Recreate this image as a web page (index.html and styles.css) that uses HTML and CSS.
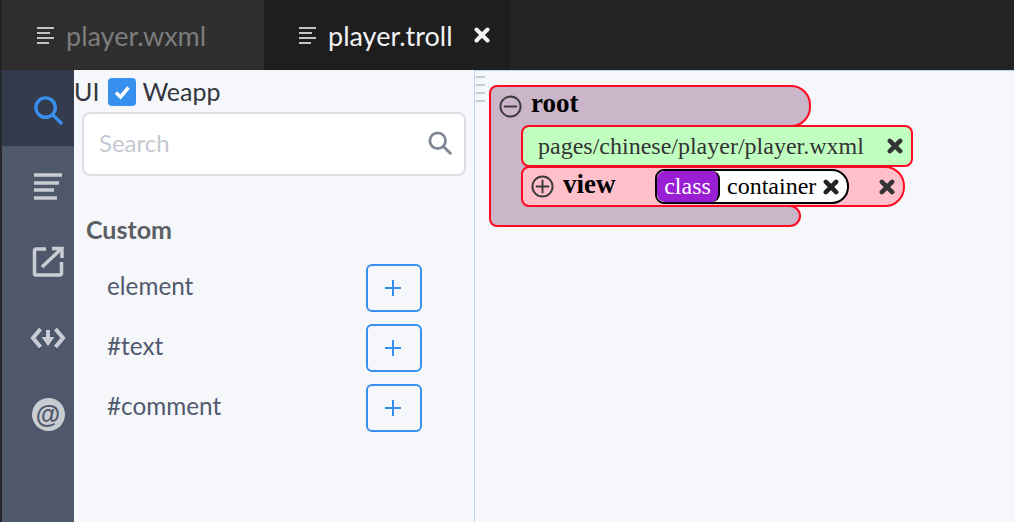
FILE: index.html
```html
<!DOCTYPE html>
<html lang="en">
<head>
<meta charset="utf-8">
<title>player.troll</title>
<link rel="stylesheet" href="styles.css">
</head>
<body>
<div class="app">
  <header class="tabbar">
    <div class="tab tab-idle">
      <svg class="tab-icon" viewBox="0 0 18 18"><path d="M0 2h17M0 7h13M0 12h17M0 17h12" /></svg>
      <span>player.wxml</span>
    </div>
    <div class="tab tab-active">
      <svg class="tab-icon" viewBox="0 0 18 18"><path d="M0 2h17M0 7h13M0 12h17M0 17h12" /></svg>
      <span>player.troll</span>
      <svg class="tab-close" viewBox="0 0 16 16"><path d="M2.500 2.500l11 11M13.500 2.500l-11 11" /></svg>
    </div>
  </header>
  <main class="workspace">
    <nav class="rail">
      <div class="rail-item rail-active">
        <svg viewBox="0 0 32 32" class="icon-search-blue"><circle cx="13" cy="13" r="10" /><path d="M20.500 20.500L30 30" /></svg>
      </div>
      <div class="rail-item">
        <svg viewBox="0 0 30 30" class="icon-list"><path d="M1 4h28M1 12h25M1 19h20M1 27h23" /></svg>
      </div>
      <div class="rail-item">
        <svg viewBox="0 0 32 32" class="icon-ext"><path d="M14 3H4a1.500 1.500 0 0 0-1.500 1.500v23A1.500 1.500 0 0 0 4 29h24a1.500 1.500 0 0 0 1.500-1.500V16" /><path d="M10 21L28 4M20 2.500h10V12" /></svg>
      </div>
      <div class="rail-item">
        <svg viewBox="0 0 36 22" class="icon-code"><path d="M10.500 2L3 11l7.500 9M25.500 2L33 11l-7.500 9" /><path d="M18 3v10" /><path class="arrow" d="M11.500 10h13L18 19z" /></svg>
      </div>
      <div class="rail-item">
        <div class="at-badge">@</div>
      </div>
    </nav>
    <aside class="panel">
      <div class="mode-row">
        <span>UI</span>
        <span class="checkbox">
          <svg viewBox="0 0 28 28"><path d="M8 14.500l4.500 4.500L20.500 9.500" /></svg>
        </span>
        <span>Weapp</span>
      </div>
      <div class="search">
        <span class="search-text">Search</span>
        <svg viewBox="0 0 26 26" class="icon-search-grey"><circle cx="10.500" cy="10.500" r="8.500" /><path d="M16.500 16.500L25 25" /></svg>
      </div>
      <h2 class="group-title">Custom</h2>
      <ul class="palette">
        <li class="palette-row"><span>element</span><button class="add" type="button"><svg viewBox="0 0 16 16"><path d="M8 0v16M0 8h16" /></svg></button></li>
        <li class="palette-row"><span>#text</span><button class="add" type="button"><svg viewBox="0 0 16 16"><path d="M8 0v16M0 8h16" /></svg></button></li>
        <li class="palette-row"><span>#comment</span><button class="add" type="button"><svg viewBox="0 0 16 16"><path d="M8 0v16M0 8h16" /></svg></button></li>
      </ul>
    </aside>
    <section class="canvas">
      <div class="handle"><i></i><i></i><i></i><i></i></div>
      <div class="tree">
        <div class="root-head">
          <svg class="toggle toggle-root" viewBox="0 0 24 24"><circle cx="12" cy="12" r="10.500" /><path d="M5 12h14" /></svg>
          <b class="root-name">root</b>
        </div>
        <div class="root-body">
          <div class="spine"></div>
          <div class="children">
            <div class="node-file">
              <span>pages/chinese/player/player.wxml</span>
              <svg class="x" viewBox="0 0 14 14"><path d="M2.500 2.500l9 9M11.500 2.500l-9 9" /></svg>
            </div>
            <div class="node-view">
              <svg class="toggle" viewBox="0 0 24 24"><circle cx="12" cy="12" r="10.500" /><path d="M5 12h14M12 5v14" /></svg>
              <b class="view-name">view</b>
              <div class="attr">
                <span class="attr-key">class</span>
                <span class="attr-val">container</span>
                <svg class="x x-attr" viewBox="0 0 14 14"><path d="M2.500 2.500l9 9M11.500 2.500l-9 9" /></svg>
              </div>
              <svg class="x x-view" viewBox="0 0 14 14"><path d="M2.500 2.500l9 9M11.500 2.500l-9 9" /></svg>
            </div>
          </div>
        </div>
        <div class="root-foot"></div>
      </div>
    </section>
  </main>
</div>
</body>
</html>
```
FILE: styles.css
```css
* { box-sizing: border-box; }
html, body { margin: 0; padding: 0; }
body { width: 1014px; height: 522px; overflow: hidden; background: #f5f7fa; font-family: Lato, "Open Sans", sans-serif; }
svg { display: block; fill: none; }
.app { display: flex; flex-direction: column; height: 522px; }

.tabbar { display: flex; height: 70px; flex: none; background: #232323; padding-left: 2px; }
.tab { display: flex; align-items: center; height: 70px; font-size: 27px; }
.tab-idle { width: 262px; padding-left: 35px; gap: 11px; color: #7d7d7d; background: #2e2e2e; }
.tab-active { width: 246px; padding-left: 35px; gap: 11px; color: #f2f2f2; background: #1e1e1e; }
.tab-icon { width: 18px; height: 18px; stroke: #c4c4c4; stroke-width: 2; }
.tab-close { width: 16px; height: 16px; stroke: #f2f2f2; stroke-width: 4; stroke-linecap: round; margin-left: 10px; }

.workspace { display: flex; flex: 1; min-height: 0; }
.rail { width: 74px; flex: none; background: #4f586b; border-left: 2px solid #26282d; display: flex; flex-direction: column; }
.rail-item { height: 76px; flex: none; display: flex; align-items: center; justify-content: center; padding: 4px 0 0 20px; }
.rail-active { background: #333b4c; }
.icon-search-blue { width: 31px; height: 31px; stroke: #3890ee; stroke-width: 3.500; }
.icon-list { width: 30px; height: 30px; stroke: #c9ccd2; stroke-width: 3.500; }
.icon-ext { width: 32px; height: 32px; stroke: #c9ccd2; stroke-width: 3.500; }
.icon-code { width: 36px; height: 22px; stroke: #c9ccd2; stroke-width: 4; }
.icon-code .arrow { fill: #c9ccd2; stroke: none; }
.at-badge { width: 33px; height: 33px; border-radius: 50%; background: #c9ccd2; color: #4f586b; font: 700 25px/32px "Liberation Sans", sans-serif; text-align: center; }

.panel { width: 400px; flex: none; background: #f5f7fa; color: #33373d; padding: 8px 8px 0 0; }
.mode-row { display: flex; align-items: center; gap: 9px; height: 28px; font-size: 25px; line-height: 26px; }
.mode-row > span:first-child { margin-top: -2px; }
.mode-row .checkbox + span { margin: -2px 0 0 -3px; }
.checkbox { width: 28px; height: 28px; background: #3890ee; border-radius: 4px; }
.checkbox svg { width: 28px; height: 28px; stroke: #fff; stroke-width: 3.500; }
.search { margin: 6px 0 0 8px; width: 384px; height: 64px; background: #fff; border: 2px solid #dcdee6; border-radius: 8px; display: flex; align-items: center; justify-content: space-between; padding: 0 12px 4px 15px; }
.search-text { font-size: 24px; color: #c5c9d1; }
.icon-search-grey { width: 24px; height: 24px; stroke: #808695; stroke-width: 3; margin-top: 2px; }
.group-title { margin: 39px 0 0 12px; font-size: 25px; line-height: 28px; font-weight: 700; color: #5b5e63; }
.palette { list-style: none; margin: 21px 0 0; padding: 0 0 0 33px; }
.palette-row { display: flex; align-items: center; justify-content: space-between; width: 315px; height: 48px; margin-bottom: 12px; font-size: 24.300px; color: #515a6e; }
.palette-row span { position: relative; bottom: 3px; }
.add { width: 56px; height: 48px; background: transparent; border: 2px solid #3890ee; border-radius: 6px; display: flex; align-items: center; justify-content: center; padding: 0 2px 0 0; }
.add svg { width: 16px; height: 16px; stroke: #3890ee; stroke-width: 2; }

.canvas { flex: 1; position: relative; border-left: 1px solid #b9d4f5; border-top: 1px solid #b9d4f5; background: #f5f7fa; padding: 14px 0 0 14px; }
.handle { position: absolute; left: 1px; top: 5px; display: flex; flex-direction: column; gap: 6px; }
.handle i { display: block; width: 9px; height: 2px; background: #c6cad3; }

.tree { display: inline-flex; flex-direction: column; align-items: flex-start; font-family: "Liberation Serif", serif; }
.toggle { width: 23px; height: 23px; stroke: #3a3a3a; stroke-width: 2; flex: none; }
.toggle-root { margin-top: 4px; }
.root-head { width: 322px; height: 42px; background: #cbb5c9; border: 2px solid #ff0a20; border-radius: 8px 20px 20px 0; display: flex; align-items: flex-start; padding: 4px 0 0 8px; gap: 9px; }
.root-name { font-size: 27px; line-height: 24px; color: #000; }
.root-body { display: flex; position: relative; margin-top: -2px; }
.spine { width: 40px; margin-right: -8px; background: #cbb5c9; border-left: 2px solid #ff0a20; }
.children { display: flex; flex-direction: column; position: relative; }
.node-file { width: 392px; height: 42px; background: #c1ffc1; border: 2px solid #ff0a20; border-radius: 8px; display: flex; align-items: center; justify-content: space-between; padding: 0 8px 0 15px; font-size: 24px; color: #333; }
.node-view { width: 384px; height: 41px; margin-top: -1px; background: #ffc0cb; border: 2px solid #ff0a20; border-radius: 8px 20px 20px 8px; display: flex; align-items: center; padding-left: 8px; font-size: 24px; }
.view-name { font-size: 27px; line-height: 24px; color: #000; margin: 0 0 6px 9px; }
.attr { margin-left: 39.500px; height: 35px; width: 194px; background: #fff; border: 2px solid #000; border-radius: 9px 17px 17px 9px; display: flex; align-items: center; overflow: hidden; flex: none; color: #000; }
.attr-key { width: 63px; height: 31px; line-height: 31px; background: #9a1ed3; color: #fff; text-align: center; border-right: 2px solid #000; border-radius: 8px; flex: none; }
.attr-val { margin-left: 7px; line-height: 31px; }
.x { width: 16px; height: 16px; stroke: #333; stroke-width: 4; stroke-linecap: round; flex: none; }
.x-attr { margin-left: 7px; stroke: #222; }
.x-view { margin-left: 30px; }
.root-foot { width: 312px; height: 22px; margin-top: -2px; background: #cbb5c9; border: 2px solid #ff0a20; border-radius: 0 11px 11px 8px; }
```
